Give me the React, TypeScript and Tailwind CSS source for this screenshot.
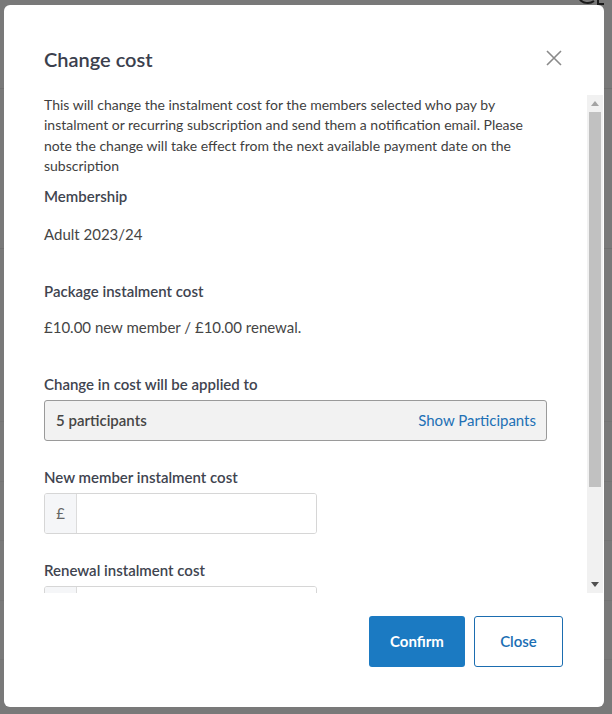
import React from "react";

function ScrollbarTrack() {
  return (
    <div className="w-[16px] shrink-0 bg-[#f1f1f1] flex flex-col">
      <div className="h-[17px] flex items-center justify-center">
        <svg width="8" height="5" viewBox="0 0 8 5">
          <path d="M0 5 L4 0 L8 5 Z" fill="#a3a3a3" />
        </svg>
      </div>
      <div className="h-[375px] mx-[2px] bg-[#c1c1c1]" />
      <div className="flex-1" />
      <div className="h-[17px] flex items-center justify-center">
        <svg width="8" height="5" viewBox="0 0 8 5">
          <path d="M0 0 L8 0 L4 5 Z" fill="#505050" />
        </svg>
      </div>
    </div>
  );
}

function Label({ children, className = "" }: { children: React.ReactNode; className?: string }) {
  return (
    <div className={"text-[15px] leading-[20px] font-semibold text-[#40444f] " + className}>{children}</div>
  );
}

function MoneyInput({ className = "" }: { className?: string }) {
  return (
    <div className={"flex w-[273px] h-[41px] border border-[#d6d6d6] rounded-[3px] overflow-hidden " + className}>
      <div className="w-[32px] shrink-0 bg-[#f5f6f8] border-r border-[#dcdcdc] flex items-center justify-center text-[15px] text-[#666]">
        £
      </div>
      <div className="flex-1 bg-white" />
    </div>
  );
}

export default function App() {
  return (
    <div
      className="relative w-[612px] h-[714px] bg-[#797979] overflow-hidden"
      style={{ fontFamily: "Lato, 'Noto Sans', sans-serif" }}
    >
      {/* faint page lines behind overlay */}
      <div className="absolute left-0 right-0 top-[88px] h-[1px] bg-[#707070]" />
      <div className="absolute left-0 right-0 top-[248px] h-[1px] bg-[#707070]" />
      <div className="absolute left-0 right-0 top-[421px] h-[1px] bg-[#747474]" />
      <div className="absolute left-0 right-0 top-[481px] h-[1px] bg-[#747474]" />
      <div className="absolute left-0 right-0 top-[540px] h-[1px] bg-[#747474]" />
      <div className="absolute left-0 right-0 top-[600px] h-[1px] bg-[#747474]" />
      <div className="absolute left-0 right-0 top-[659px] h-[1px] bg-[#747474]" />
      <svg className="absolute left-[576px] top-[-8px]" width="30" height="14" viewBox="0 0 30 14">
        <path d="M3 6 C6 12 14 12 18 9" stroke="#1a1a1a" strokeWidth="2" fill="none" />
        <path d="M22 0 L22 12 L28 12" stroke="#1a1a1a" strokeWidth="2" fill="none" />
      </svg>

      {/* modal */}
      <div className="absolute left-[4px] top-[5px] w-[600px] h-[702px] bg-white rounded-[6px] flex flex-col">
        {/* header */}
        <div className="h-[90px] flex items-start justify-between pl-[40px] pr-[40px] pt-[40px]">
          <h2 className="text-[20px] leading-[30px] font-semibold text-[#3b404d] mt-[-1px]">Change cost</h2>
          <button className="mt-[3px] w-[20px] h-[20px] flex items-center justify-center">
            <svg width="16" height="16" viewBox="0 0 16 16">
              <path d="M1 1 L15 15 M15 1 L1 15" stroke="#8a8a8a" strokeWidth="1.6" />
            </svg>
          </button>
        </div>

        {/* body */}
        <div className="h-[498px] flex">
          <div className="flex-1 overflow-hidden pl-[40px] pr-[36px]">
            <p className="w-[490px] text-[14px] leading-[20.3px] text-[#3f3f3f]">
              This will change the instalment cost for the members selected who pay by instalment or recurring
              subscription and send them a notification email. Please note the change will take effect from the
              next available payment date on the subscription
            </p>
            <Label className="mt-[10px]">Membership</Label>
            <div className="mt-[18px] text-[15px] leading-[20px] text-[#454545]">Adult 2023/24</div>

            <Label className="mt-[37px]">Package instalment cost</Label>
            <div className="mt-[16px] text-[15px] leading-[20px] text-[#454545]">
              £10.00 new member / £10.00 renewal.
            </div>

            <Label className="mt-[37px]">Change in cost will be applied to</Label>
            <div className="mt-[6px] h-[41px] w-[503px] bg-[#f2f2f2] border border-[#9a9a9a] rounded-[3px] flex items-center justify-between pl-[11px] pr-[10px]">
              <span className="text-[15px] font-semibold text-[#454545]">5 participants</span>
              <span className="text-[15px] text-[#2270b5]">Show Participants</span>
            </div>

            <Label className="mt-[26px]">New member instalment cost</Label>
            <MoneyInput className="mt-[6px]" />

            <Label className="mt-[26px]">Renewal instalment cost</Label>
            <MoneyInput className="mt-[6px]" />
          </div>
          <ScrollbarTrack />
          <div className="w-[1px]" />
        </div>

        {/* footer */}
        <div className="flex justify-end gap-[9px] pt-[23px] pr-[41px]">
          <button className="w-[96px] h-[51px] rounded-[3px] bg-[#1b7ac2] text-white text-[15px] font-bold">
            Confirm
          </button>
          <button className="w-[89px] h-[51px] rounded-[3px] bg-white border border-[#1b6db0] text-[#1b6eb3] text-[15px] font-semibold">
            Close
          </button>
        </div>
      </div>
    </div>
  );
}
